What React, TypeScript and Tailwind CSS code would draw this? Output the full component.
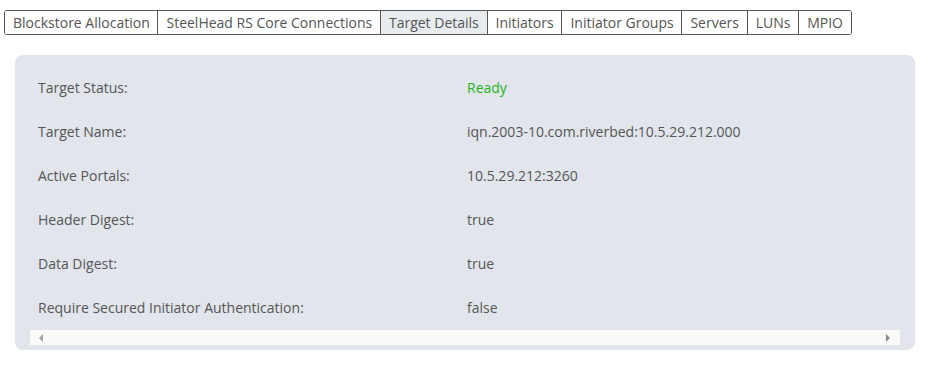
const tabs = [
  "Blockstore Allocation",
  "SteelHead RS Core Connections",
  "Target Details",
  "Initiators",
  "Initiator Groups",
  "Servers",
  "LUNs",
  "MPIO",
];

const rows: { label: string; value: string; ok?: boolean }[] = [
  { label: "Target Status:", value: "Ready", ok: true },
  { label: "Target Name:", value: "iqn.2003-10.com.riverbed:10.5.29.212.000" },
  { label: "Active Portals:", value: "10.5.29.212:3260" },
  { label: "Header Digest:", value: "true" },
  { label: "Data Digest:", value: "true" },
  { label: "Require Secured Initiator Authentication:", value: "false" },
];

function App() {
  return (
    <div
      className="min-h-screen bg-white text-[14px] text-[#555]"
      style={{ fontFamily: '"Open Sans", "Liberation Sans", sans-serif' }}
    >
      <div className="pt-[10px] pl-[4px]">
        <div className="inline-flex border border-[#555] rounded-[3px] overflow-hidden">
          {tabs.map((t, i) => (
            <div
              key={t}
              className={
                "h-[23px] leading-[23px] pl-[8px] pr-[7.75px] " +
                (i > 0 ? "border-l border-[#555] " : "") +
                (t === "Target Details" ? "bg-[#e8ecef]" : "bg-white")
              }
            >
              {t}
            </div>
          ))}
        </div>
      </div>

      <div className="mt-[20px] ml-[15px] w-[900px] rounded-[8px] bg-[#e2e5ec] pt-[10px] px-[15px] pb-[5px]">
        <div>
          {rows.map((r) => (
            <div key={r.label} className="flex h-[44px] items-center">
              <div className="w-[429px] pl-[8px]">{r.label}</div>
              <div className={"pl-[8px] " + (r.ok ? "text-[#1fb31f]" : "")}>
                {r.value}
              </div>
            </div>
          ))}
        </div>
        <div className="mt-[1px] h-[15px] bg-[#fafafa] flex items-center justify-between px-[9px]">
          <svg width="5" height="8" viewBox="0 0 5 8">
            <path d="M4 0 L0 4 L4 8 Z" fill="#a3a3a3" />
          </svg>
          <svg width="5" height="8" viewBox="0 0 5 8">
            <path d="M0 0 L4 4 L0 8 Z" fill="#8a8a8a" />
          </svg>
        </div>
      </div>
    </div>
  );
}

export default App;
